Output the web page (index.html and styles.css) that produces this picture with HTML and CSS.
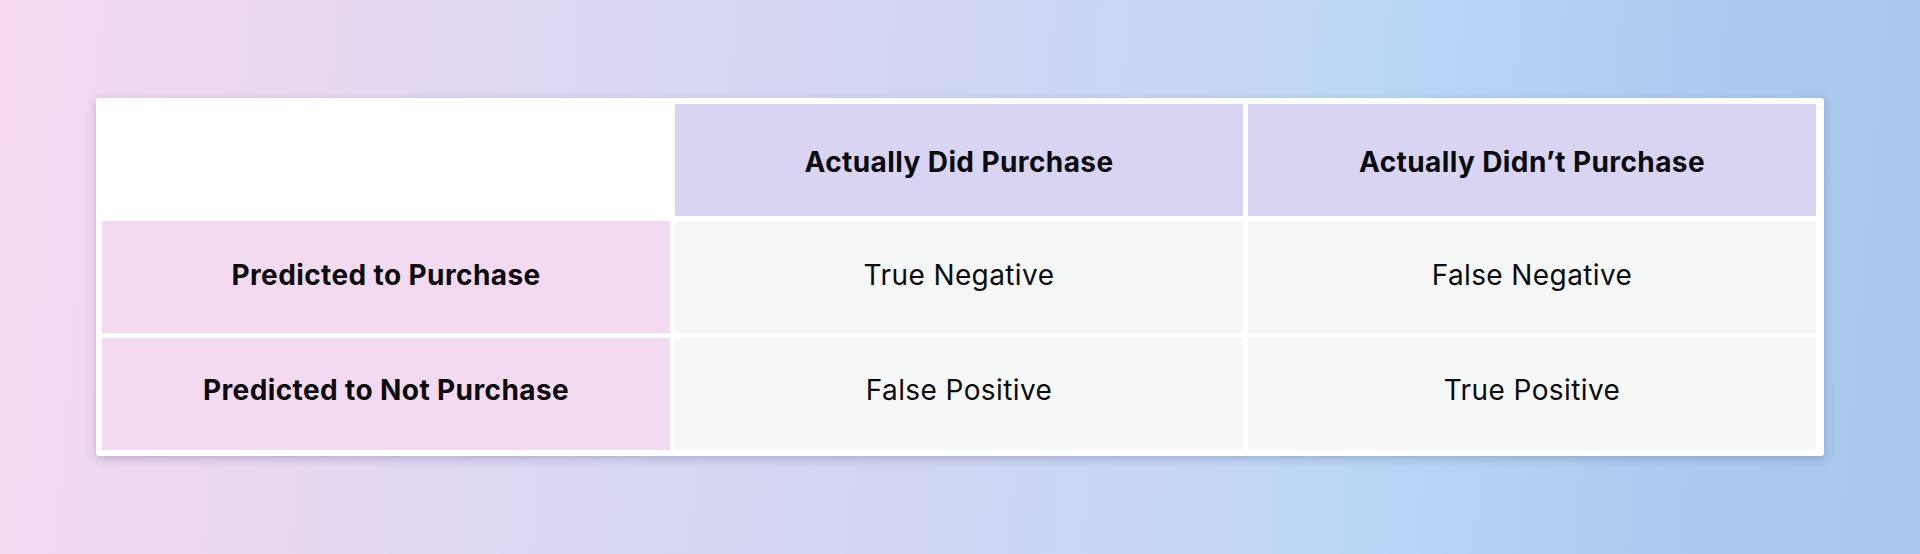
FILE: index.html
```html
<!DOCTYPE html>
<html lang="en">
<head>
<meta charset="utf-8">
<title>Confusion Matrix</title>
<link rel="stylesheet" href="styles.css">
</head>
<body>
<main class="stage">
  <section class="card">
    <div class="matrix">
      <div class="cell blank"></div>
      <div class="cell head">Actually Did Purchase</div>
      <div class="cell head">Actually Didn’t Purchase</div>
      <div class="cell side">Predicted to Purchase</div>
      <div class="cell data">True Negative</div>
      <div class="cell data">False Negative</div>
      <div class="cell side last">Predicted to Not Purchase</div>
      <div class="cell data last">False Positive</div>
      <div class="cell data last">True Positive</div>
    </div>
  </section>
</main>
</body>
</html>
```

FILE: styles.css
```css
html, body {
  margin: 0;
  padding: 0;
}
body {
  width: 1920px;
  height: 554px;
  overflow: hidden;
  font-family: "Inter", "Lato", "Liberation Sans", sans-serif;
  color: #0b0b0d;
}
.stage {
  box-sizing: border-box;
  height: 554px;
  padding: 98px 96px 0 96px;
  background: linear-gradient(95deg, #f6d9f0 0%, #e6d7f1 18%, #dad8f3 32%, #d1d6f4 48%, #c6d7f5 62%, #b6d6f7 74%, #abcbf0 87%, #a6c6ec 100%);
}
.card {
  width: 1728px;
  box-sizing: border-box;
  background: #ffffff;
  border-radius: 3px;
  padding: 6px 7px 6px 6px;
  box-shadow: 0 3px 10px rgba(70, 70, 120, 0.28);
}
.matrix {
  display: grid;
  grid-template-columns: 568px 568px 568px;
  grid-template-rows: 112px 112px 112px;
  gap: 5px;
}
.cell {
  display: flex;
  align-items: center;
  justify-content: center;
  font-size: 28px;
  letter-spacing: 0.4px;
  line-height: 1;
  box-sizing: border-box;
}
.blank {
  background: #ffffff;
}
.head {
  background: #d8d4f1;
  font-weight: 700;
  padding-top: 4px;
}
.side {
  background: #f4daf1;
  font-weight: 700;
  padding-bottom: 4px;
}
.data {
  background: #f6f8f8;
  font-weight: 400;
  padding-bottom: 4px;
}
.last {
  padding-bottom: 8px;
}
```
